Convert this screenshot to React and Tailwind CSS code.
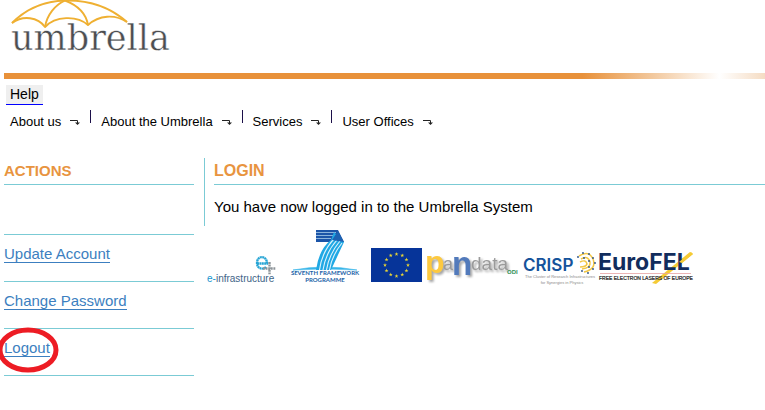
const menu = ['About us', 'About the Umbrella', 'Services', 'User Offices'];
const actions = ['Update Account', 'Change Password', 'Logout'];

function UmbrellaLogo() {
  return (
    <svg className="block h-[73px] w-[180px]" viewBox="0 0 180 73" role="img" aria-label="umbrella">
      <g fill="none" stroke="#efb032" strokeWidth="1.9" strokeLinejoin="round">
        <path d="M12 23C27 8 44 1 65 0.500C89 0 110 7 127 22" />
        <path d="M12 23C23 15 38 17 45 27C55 16 77 15 88 25C99 15 115 14 127 22" />
        <path d="M65 0.500C55 5 47 15 45 27M65 0.500C77 5 86 13 88 25" />
      </g>
      <text x="11" y="50" fontSize="35" fill="#4c4e51" stroke="#fff" strokeWidth="0.4" className="font-['DejaVu_Serif',serif]">umbrella</text>
    </svg>
  );
}

function TurnArrow() {
  return (
    <svg className="h-[6px] w-[10px]" viewBox="0 0 10 6" aria-hidden="true">
      <path d="M0 1.500H7.500V4" fill="none" stroke="#222" />
      <path d="M5 3.500H10L7.500 6Z" fill="#222" />
    </svg>
  );
}

function EInfrastructure() {
  return (
    <svg className="h-[60px] w-[80px]" viewBox="205 228 80 60" role="img" aria-label="e-infrastructure">
      <path d="M257 263.500H267C267 255 257 255 257 263C257 269 263 270 266 267" fill="none" stroke="#27a5d5" strokeWidth="2.300" strokeDasharray="2 .4" />
      <path d="M263 268.500H275.500M269.500 262V275" fill="none" stroke="#8d9499" strokeWidth="2.400" strokeDasharray="1.900 .7" />
      <text x="207" y="282" fontSize="10" fill="#426487" className="font-['Liberation_Sans',sans-serif]"><tspan fill="#1796cf">e-</tspan>infrastructure</text>
    </svg>
  );
}

function SeventhFramework() {
  return (
    <svg className="h-[60px] w-[80px]" viewBox="285 228 80 60" role="img" aria-label="Seventh Framework Programme">
      <path d="M293 270Q325 264 357 270Q325 268 293 270Z" fill="#37b5e9" stroke="#37b5e9" strokeWidth=".6" />
      <path d="M316 230H338L344 242H316Z" fill="#1c55a8" />
      <path d="M316 232.500H336M316 235.500H333M316 238.500H331" stroke="#a9cdea" strokeWidth=".8" />
      <path d="M334 232L344 242L331 270H316Q319 249 331 240Z" fill="#20a8e4" />
      <path d="M319.500 270Q322 251 335 238M323 270Q326 252 337 240M326.500 270Q329 254 340 241M329.500 270Q332 255 342 243" fill="none" stroke="#ddf3fc" strokeWidth="1.100" />
      <path d="M332 240L338 231L344 242Z" fill="#1d62b2" />
      <g fill="#1b62a7" fontSize="6" fontWeight="700" textAnchor="middle" className="font-[Lato,sans-serif]">
        <text x="325" y="275">SEVENTH FRAMEWORK</text>
        <text x="325" y="282">PROGRAMME</text>
      </g>
    </svg>
  );
}

function EuropeanUnion() {
  const stars = Array.from({ length: 12 }, (_, i) => {
    const a = (i * Math.PI) / 6;
    return [396.5 + 11.5 * Math.sin(a), 265 - 11 * Math.cos(a)];
  });
  return (
    <svg className="h-[60px] w-[60px]" viewBox="365 228 60 60" role="img" aria-label="European Union">
      <rect x="371" y="248" width="51" height="34" fill="#063499" />
      {stars.map(([x, y], i) => (
        <path key={i} transform={`translate(${x} ${y})`} d="M0-2L.5-.6H2L.8.3L1.200 1.700L0 .9L-1.200 1.700L-.8.3L-2-.6H-.5Z" fill="#e6d336" />
      ))}
    </svg>
  );
}

function PanData() {
  return (
    <svg className="h-[60px] w-[95px]" viewBox="425 228 95 60" role="img" aria-label="PanData ODI">
      <g className="font-['Liberation_Sans',sans-serif] drop-shadow-[2px_2px_1px_rgba(0,0,0,0.35)]">
        <text x="425" y="273" fontSize="32" fontWeight="700" fill="#fdc93f">p</text>
        <text x="443" y="270" fontSize="18" fill="#9a9a9a">a</text>
        <text x="452" y="275" fontSize="33" fontWeight="700" fill="#527abb">n</text>
        <text x="471" y="270" fontSize="19" fill="#9a9a9a">data</text>
      </g>
      <text x="507" y="274" fontSize="6" fontWeight="700" fill="#2d8f56" className="font-['Liberation_Sans',sans-serif]">ODI</text>
    </svg>
  );
}

function Crisp() {
  return (
    <svg className="h-[60px] w-[78px]" viewBox="520 228 78 60" role="img" aria-label="CRISP">
      <text x="523" y="271" fontSize="17" fontWeight="600" fill="#15539b" className="font-[Inter,sans-serif]">CRISP</text>
      <g fill="none" stroke="#f2c744" strokeWidth="1.500">
        <path d="M579 256Q589 250 593 259Q597 269 584 272" />
        <path d="M581 259Q588 255 590 262Q591 268 582 269" />
        <path d="M580 262Q586 259 587 264Q586 267 580 267" />
      </g>
      <g fill="#244b82">
        {[[578, 257], [583, 253], [589, 254], [593, 258], [595, 263], [593, 269], [588, 273], [582, 271], [584, 258], [589, 261], [589, 267]].map(([x, y]) => (
          <circle key={`${x}-${y}`} cx={x} cy={y} r=".9" />
        ))}
      </g>
      <g fill="#8a8a8a" fontSize="4" textAnchor="middle" className="font-['Liberation_Sans',sans-serif]">
        <text x="560" y="278">The Cluster of Research Infrastructures</text>
        <text x="562" y="284">for Synergies in Physics</text>
      </g>
    </svg>
  );
}

function EuroFel() {
  return (
    <svg className="h-[60px] w-[100px]" viewBox="598 228 100 60" role="img" aria-label="EuroFEL">
      <path d="M690 252L693 254L656 284L652 283Z" fill="#f5cb35" />
      <path d="M600 273.500H691" stroke="#e6a2a2" strokeWidth=".8" />
      <text x="598" y="270" fontSize="23" fontWeight="700" fill="#122d5d" className="font-[Inter,sans-serif]">EuroFEL</text>
      <path d="M691 252L693 254L682 263L679 262Z" fill="#f5cb35" />
      <text x="599" y="280" fontSize="5" fill="#222" stroke="#222" strokeWidth=".2" className="font-['Liberation_Sans',sans-serif]">FREE ELECTRON LASERS OF EUROPE</text>
    </svg>
  );
}

export default function App() {
  return (
    <div className="min-h-screen bg-white pl-1 font-['Liberation_Sans',Arial,sans-serif] text-black">
      <header>
        <div className="-ml-1"><UmbrellaLogo /></div>
        <div className="h-[6px] bg-[linear-gradient(90deg,#e8913a_76%,#f2c79b_85%,#fff_94%,#f5dcc3_100%)]" />
        <nav className="px-[2px] pt-[6px]">
          <a href="#help" className="inline-block h-5 border-b border-[#0000ff] bg-[#efefef] px-1 text-sm leading-[19px] align-top">Help</a>
          <ul className="flex h-6 pt-px pl-1 text-[13px] leading-[24px]">
            {menu.map((item, i) => (
              <li key={item} className="flex">
                {i > 0 && <span className="mx-[10px] h-[13px] w-px bg-[#1c104a]" />}
                <a href="#menu" className="flex items-center gap-[9px]">{item}<TurnArrow /></a>
              </li>
            ))}
          </ul>
        </nav>
      </header>
      <div className="flex items-start pt-[25px]">
        <aside className="w-[190px] shrink-0">
          <h2 className="h-[27px] border-b border-[#7bcbd5] text-[15px] leading-[26px] font-bold text-[#e8943f]">ACTIONS</h2>
          <div className="h-[50px] border-b border-[#7bcbd5]" />
          <ul>
            {actions.map((item) => (
              <li key={item} className="relative h-[47px] border-b border-[#7bcbd5] pt-[10px] text-[15px] leading-[17px]">
                <a href="#action" className="inline-block border-b border-[#3c7fc0] text-[#3c7fc0]">{item}</a>
                {item === 'Logout' && (
                  <svg className="pointer-events-none absolute -top-[3px] -left-1 h-[48px] w-[60px]" viewBox="0 0 60 48" aria-hidden="true">
                    <ellipse cx="28" cy="24" rx="28" ry="20" fill="none" stroke="#ed1c24" strokeWidth="5" />
                  </svg>
                )}
              </li>
            ))}
          </ul>
        </aside>
        <main className="ml-[10px] min-w-0 flex-1">
          <section className="h-[68px] border-l border-[#7bcbd5] pl-[9px]">
            <h1 className="h-[27px] border-b border-[#7bcbd5] text-base leading-[25px] font-bold text-[#e8943f]">LOGIN</h1>
            <p className="pt-[13px] text-[15px] leading-[18px]">You have now logged in to the Umbrella System</p>
          </section>
          <div className="flex pt-[2px] pl-px">
            <EInfrastructure />
            <SeventhFramework />
            <EuropeanUnion />
            <PanData />
            <Crisp />
            <EuroFel />
          </div>
        </main>
      </div>
    </div>
  );
}
